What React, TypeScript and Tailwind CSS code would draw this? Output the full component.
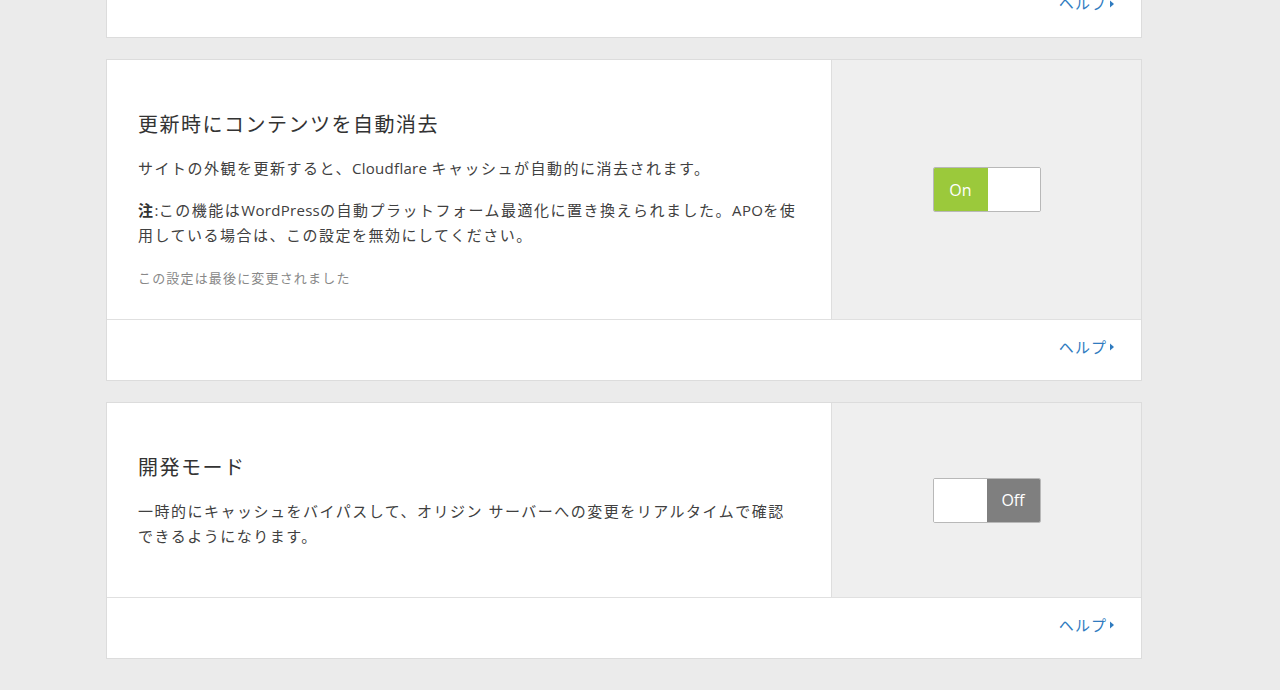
const font = { fontFamily: '"Open Sans", "Noto Sans CJK JP", sans-serif' };

// Latin runs are tighter than the Japanese text around them
function L({ children }: { children: React.ReactNode }) {
  return <span className="tracking-[0.02em]">{children}</span>;
}

function HelpFooter({ top = true }: { top?: boolean }) {
  return (
    <div className={`flex h-[61px] items-center justify-end pr-[26px] pb-[6px] ${top ? 'border-t border-[#e0e0e0]' : ''}`}>
      <a href="#" className="flex items-center text-[15px] tracking-[0.07em] text-[#2f7bbf]">
        ヘルプ
        <svg width="6" height="8" viewBox="0 0 6 8" className="ml-[2px]">
          <path d="M1 0.5 L5 4 L1 7.5 Z" fill="#2f7bbf" />
        </svg>
      </a>
    </div>
  );
}

function Toggle({ on }: { on: boolean }) {
  return (
    <div className="flex h-[45px] w-[108px] overflow-hidden rounded-[2px] border border-[#b8b8b8] bg-white">
      {on ? (
        <>
          <div className="flex w-[54px] items-center justify-center bg-[#9bc93b] text-[16px] text-white">On</div>
          <div className="flex-1 bg-white" />
        </>
      ) : (
        <>
          <div className="w-[53px] bg-white" />
          <div className="flex flex-1 items-center justify-center bg-[#7f7f7f] text-[16px] text-white">Off</div>
        </>
      )}
    </div>
  );
}

function SettingCard({ title, on, children }: { title: string; on: boolean; children: React.ReactNode }) {
  return (
    <div className="border border-[#dcdcdc] bg-white">
      <div className="flex">
        <div className="flex-1 px-[31px] pt-[50px] pb-[31px]">
          <h2 className="mb-[16px] text-[20px] leading-[30px] tracking-[0.075em] text-[#333333]">{title}</h2>
          {children}
        </div>
        <div className="flex w-[310px] items-center justify-center border-l border-[#dedede] bg-[#efefef]">
          <Toggle on={on} />
        </div>
      </div>
      <HelpFooter />
    </div>
  );
}

export default function App() {
  return (
    <div className="min-h-[690px] bg-[#ebebeb] pb-[30px]" style={font}>
      <div className="ml-[106px] flex w-[1036px] flex-col gap-[21px]">
        <div className="-mt-[25px] border border-[#dcdcdc] bg-white">
          <HelpFooter top={false} />
        </div>

        <SettingCard title="更新時にコンテンツを自動消去" on={true}>
          <p className="mb-[17px] text-[15px] leading-[25px] tracking-[0.1em] text-[#404040]">
            サイトの外観を更新すると、<L>Cloudflare </L>キャッシュが自動的に消去されます。
          </p>
          <p className="mb-[20px] text-[15px] leading-[25px] tracking-[0.1em] text-[#404040]">
            <strong className="font-bold text-[#333333]">注</strong><L>:</L>この機能は<L>WordPress</L>の自動プラットフォーム最適化に置き換えられました。<L>APO</L>を使用している場合は、この設定を無効にしてください。
          </p>
          <p className="text-[13px] leading-[20px] tracking-[0.09em] text-[#888888]">この設定は最後に変更されました</p>
        </SettingCard>

        <SettingCard title="開発モード" on={false}>
          <p className="mb-[17px] text-[15px] leading-[25px] tracking-[0.1em] text-[#404040]">
            一時的にキャッシュをバイパスして、オリジン サーバーへの変更をリアルタイムで確認できるようになります。
          </p>
        </SettingCard>
      </div>
    </div>
  );
}
